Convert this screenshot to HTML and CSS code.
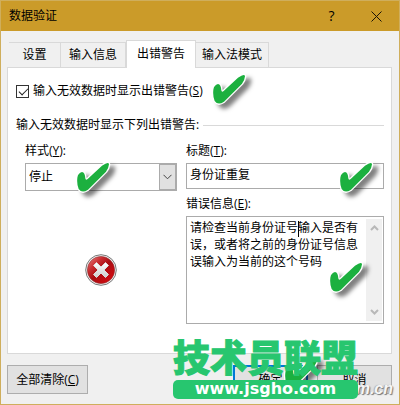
FILE: index.html
```html
<!DOCTYPE html>
<html lang="zh-CN">
<head>
    <meta charset="UTF-8">
    <meta name="viewport" content="width=device-width, initial-scale=1.0">
    <title>数据验证</title>
    <link rel="stylesheet" href="styles.css">
</head>
<body>
    <!-- Shared drawings -->
    <svg class="defs" width="0" height="0" aria-hidden="true">
        <symbol id="tick" viewBox="0 0 132 120">
            <path d="M10 50Q12 36 24 33Q33 34 34 52Q35 59 41 54L84 14Q104 1 105 10Q104 22 96 32L42 86Q24 98 14 84Q8 70 10 50Z" fill="#1cb03f" stroke="#fff" stroke-width="8" stroke-linejoin="round" paint-order="stroke"/>
        </symbol>
    </svg>

    <div class="dialog">
        <header class="titlebar">
            <h1>数据验证</h1>
            <button class="title-button" aria-label="帮助">?</button>
            <button class="title-button" aria-label="关闭">
                <svg width="11" height="11" viewBox="0 0 11 11"><path d="M.5 .5l10 10M10.5 .5l-10 10" stroke="#1a1408" fill="none"/></svg>
            </button>
        </header>

        <main class="content">
            <nav class="tabs">
                <button class="tab tab-short">设置</button>
                <button class="tab">输入信息</button>
                <button class="tab active">出错警告</button>
                <button class="tab tab-long">输入法模式</button>
            </nav>

            <section class="panel">
                <div class="check-row">
                    <input type="checkbox" id="showAlert" checked>
                    <label for="showAlert">输入无效数据时显示出错警告(<u>S</u>)</label>
                    <svg class="tick tick-row"><use href="#tick"/></svg>
                </div>

                <h2 class="group-title">输入无效数据时显示下列出错警告:</h2>

                <div class="fields">
                    <div class="column">
                        <label for="alertStyle">样式(<u>Y</u>):</label>
                        <div class="combo">
                            <select id="alertStyle">
                                <option>停止</option>
                                <option>警告</option>
                                <option>信息</option>
                            </select>
                            <span class="combo-arrow">
                                <svg width="9" height="6" viewBox="0 0 9 6"><path d="M.5 .8l4 4 4-4" stroke="#444" fill="none"/></svg>
                            </span>
                            <svg class="tick tick-combo"><use href="#tick"/></svg>
                        </div>
                        <!-- Stop icon -->
                        <svg class="stop-icon" width="32" height="32" viewBox="0 0 32 32">
                            <defs>
                                <linearGradient id="red" x1="0" y1="0" x2="1" y2="1">
                                    <stop offset="0" stop-color="#e88"/>
                                    <stop offset=".3" stop-color="#c92c30"/>
                                    <stop offset=".5" stop-color="#a90d12"/>
                                    <stop offset="1" stop-color="#e00a10"/>
                                </linearGradient>
                                <linearGradient id="silver" x1="0" y1="0" x2="0" y2="1">
                                    <stop offset="0" stop-color="#fff"/>
                                    <stop offset="1" stop-color="#ccc"/>
                                </linearGradient>
                            </defs>
                            <circle cx="16" cy="16" r="15.3" fill="#f4f4f4" stroke="#777"/>
                            <circle cx="16" cy="16" r="13.6" fill="url(#red)" stroke="#8c2a2c" stroke-width=".6"/>
                            <path d="M8.500 11.500l3-3 4.500 4.500 4.500-4.500 3 3-4.500 4.500 4.500 4.500-3 3-4.500-4.500-4.500 4.500-3-3 4.500-4.500z" fill="url(#silver)" stroke="#ddd" stroke-linejoin="round"/>
                        </svg>
                    </div>

                    <div class="column column-wide">
                        <label for="alertTitle">标题(<u>T</u>):</label>
                        <div class="title-field">
                            <input type="text" id="alertTitle" value="身份证重复">
                            <svg class="tick tick-field"><use href="#tick"/></svg>
                        </div>
                        <label for="alertMessage">错误信息(<u>E</u>):</label>
                        <div class="message">
                            <textarea id="alertMessage">请检查当前身份证号输入是否有误，或者将之前的身份证号信息误输入为当前的这个号码</textarea>
                            <div class="scrollbar">
                                <svg width="9" height="6" viewBox="0 0 9 6"><path d="M1 5l3.500-3.500 3.500 3.500" stroke="#b8b8b8" stroke-width="2" fill="none"/></svg>
                                <svg width="9" height="6" viewBox="0 0 9 6"><path d="M1 1l3.500 3.500 3.500-3.500" stroke="#b8b8b8" stroke-width="2" fill="none"/></svg>
                            </div>
                            <span class="caret"></span>
                            <svg class="tick tick-message"><use href="#tick"/></svg>
                        </div>
                    </div>
                </div>
            </section>

            <footer class="actions">
                <button class="button button-clear">全部清除(<u>C</u>)</button>
                <button class="button button-ok">确定
                    <svg class="tick tick-ok"><use href="#tick"/></svg>
                </button>
                <button class="button">取消</button>
            </footer>
        </main>

        <!-- Site stamps over the bottom edge -->
        <span class="stamp-grey">m.cn</span>
        <div class="stamp">
            <div class="stamp-name">技术员联盟</div>
            <div class="stamp-url">www.jsgho.com</div>
        </div>
    </div>
</body>
</html>
```

FILE: styles.css
```css
* {
    margin: 0;
    padding: 0;
    box-sizing: border-box;
}

body, button, input, select, textarea {
    font-family: "Open Sans", "Noto Sans CJK SC", sans-serif;
    font-size: 12px;
    line-height: 18px;
    color: #000;
}

.defs {
    position: absolute;
}

/* Dialog window */
.dialog {
    position: relative;
    display: flex;
    flex-direction: column;
    min-height: 100vh;
    border: 1px solid #cfae5c;
    background-color: #f0f0f0;
}

.titlebar {
    display: flex;
    align-items: center;
    height: 30px;
    padding-left: 8px;
    background-color: #cb9b29;
}

.titlebar h1 {
    flex: 1;
    font-size: 12px;
    font-weight: normal;
}

.title-button {
    width: 45px;
    height: 28px;
    border: none;
    background: none;
    font-size: 14px;
}

.title-button svg {
    display: block;
    margin: auto;
}

.content {
    display: flex;
    flex: 1;
    flex-direction: column;
    padding: 9px 7px 10px 6px;
}

/* Tabs */
.tabs {
    display: flex;
    align-items: flex-end;
    padding-left: 2px;
}

.tab {
    width: 65px;
    height: 25px;
    border: 1px solid #d9d9d9;
    border-width: 1px 1px 0 0;
    background-color: #f0f0f0;
}

.tab-short {
    width: 52px;
}

.tab-long {
    width: 73px;
}

.tab.active {
    width: 70px;
    height: 28px;
    margin-bottom: -1px;
    padding-bottom: 1px;
    border-left-width: 1px;
    background-color: #fff;
    z-index: 1;
}

/* Tab page */
.panel {
    flex: 1;
    padding: 14px 7px 28px 8px;
    border: 1px solid #d9d9d9;
    background-color: #fff;
}

.check-row {
    position: relative;
    display: flex;
    align-items: center;
    gap: 4px;
}

.check-row input {
    appearance: none;
    width: 13px;
    height: 13px;
    border: 1px solid #333;
    background-color: #fff;
}

.check-row input:checked::after {
    content: "";
    display: block;
    width: 8px;
    height: 4px;
    margin: 2px 0 0 2px;
    border: 1px solid #222;
    border-width: 0 0 1px 1px;
    transform: rotate(-45deg);
}

.group-title {
    display: flex;
    align-items: center;
    gap: 4px;
    margin-top: 16px;
    font-size: 12px;
    font-weight: normal;
}

.group-title::after {
    content: "";
    flex: 1;
    height: 1px;
    background-color: #d9d9d9;
}

.fields {
    display: flex;
    gap: 9px;
    margin-top: 8px;
    padding-left: 9px;
}

.column {
    display: flex;
    flex: 152;
    flex-direction: column;
    min-width: 0;
}

.column-wide {
    flex: 198;
}

.combo, .title-field, .message {
    position: relative;
    display: flex;
    margin-top: 3px;
    border: 1px solid #ababab;
}

.combo {
    height: 28px;
}

.combo select {
    appearance: none;
    flex: 1;
    padding-left: 3px;
    border: none;
    background-color: #fff;
}

.combo-arrow {
    position: absolute;
    top: 0;
    right: 0;
    bottom: 0;
    display: flex;
    align-items: center;
    justify-content: center;
    width: 17px;
    border: 1px solid #ababab;
    background-color: #e1e1e1;
    pointer-events: none;
}

.stop-icon {
    display: block;
    margin: 63px auto 0;
}

.title-field {
    height: 26px;
    margin-bottom: 6px;
}

.title-field input {
    flex: 1;
    min-width: 0;
    padding: 0 3px 2px;
    border: none;
}

.message {
    height: 108px;
}

.message textarea {
    flex: 1;
    min-width: 0;
    padding: 2px 3px;
    border: none;
    resize: none;
    overflow: hidden;
    line-height: 17px;
}

.scrollbar {
    display: flex;
    flex-direction: column;
    justify-content: space-between;
    align-items: center;
    width: 16px;
    margin: 2px 1px;
    padding: 6px 0;
    background-color: #f0f0f0;
}

.caret {
    position: absolute;
    top: 4px;
    left: 111px;
    width: 1px;
    height: 16px;
    background-color: #000;
}

/* Green ticks */
.tick {
    position: absolute;
    z-index: 1;
    width: 44px;
    height: 40px;
    overflow: visible;
    filter: drop-shadow(5px 4px 2px rgba(0, 0, 0, 0.5));
    pointer-events: none;
}

.tick-row {
    top: -9px;
    left: 194px;
}

.tick-combo {
    top: -3px;
    left: 48px;
}

.tick-field {
    top: -3px;
    right: 2px;
}

.tick-message {
    top: 44px;
    right: 12px;
}

.tick-ok {
    top: -11px;
    right: -20px;
}

/* Bottom buttons */
.actions {
    display: flex;
    gap: 9px;
    margin-top: 11px;
}

.button {
    position: relative;
    width: 75px;
    height: 29px;
    border: 1px solid #adadad;
    background-color: #e1e1e1;
}

.button-clear {
    width: 81px;
    margin-right: auto;
}

.button-ok {
    border: 2px solid #0078d7;
}

/* Stamps */
.stamp {
    position: absolute;
    right: 41px;
    bottom: 5px;
    z-index: 2;
    width: 185px;
    color: #27c66f;
    text-align: center;
}

.stamp-name {
    margin-bottom: 2px;
    font-family: "Noto Sans CJK SC", sans-serif;
    font-size: 37px;
    font-weight: 900;
    line-height: 44px;
    white-space: nowrap;
    -webkit-text-stroke: 1px #27c66f;
}

.stamp-url {
    height: 19px;
    border-radius: 5px;
    background-color: #27c66f;
    color: #fff;
    font-family: "DejaVu Sans", sans-serif;
    font-size: 16px;
    font-weight: bold;
    line-height: 17px;
}

.stamp-grey {
    position: absolute;
    right: 6px;
    bottom: 6px;
    z-index: 2;
    color: #f6f6f6;
    font-family: "Liberation Sans", sans-serif;
    font-size: 16px;
    font-style: italic;
    font-weight: bold;
    text-shadow: 1px 1px 1px #777, -1px 0 1px #aaa;
}
```
